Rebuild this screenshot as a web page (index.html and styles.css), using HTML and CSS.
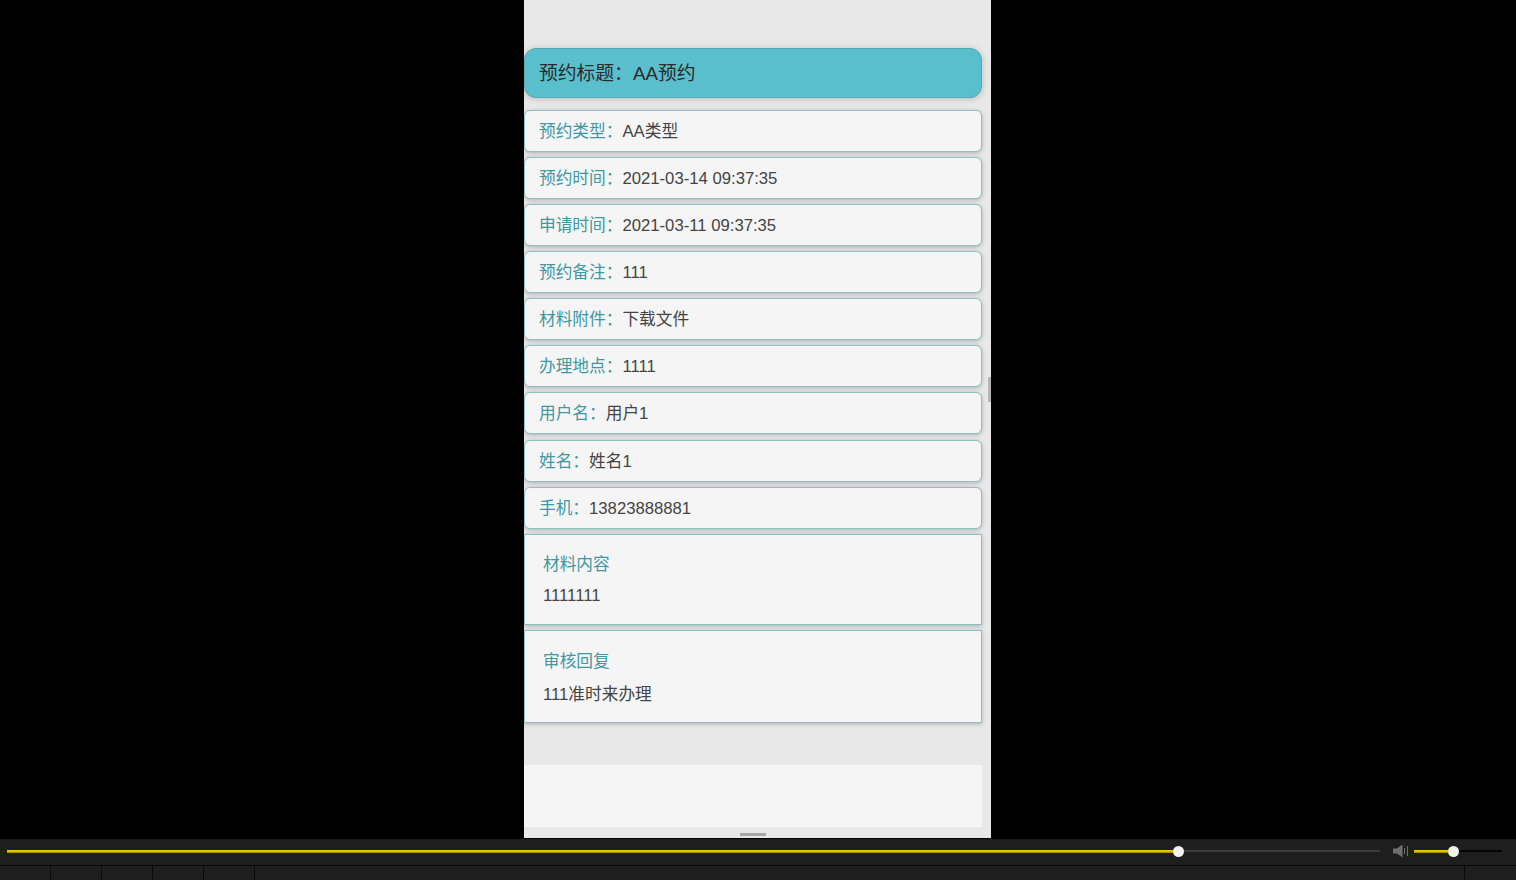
FILE: index.html
```html
<!DOCTYPE html>
<html lang="zh-CN">
<head>
<meta charset="utf-8">
<title>预约详情</title>
<link rel="stylesheet" href="styles.css">
</head>
<body>
<div class="stage">
  <main class="phone">
    <div class="content">
      <h1 class="title">预约标题：AA预约</h1>
      <ul class="rows">
        <li class="row"><span class="label">预约类型：</span>AA类型</li>
        <li class="row"><span class="label">预约时间：</span>2021-03-14 09:37:35</li>
        <li class="row"><span class="label">申请时间：</span>2021-03-11 09:37:35</li>
        <li class="row"><span class="label">预约备注：</span>111</li>
        <li class="row"><span class="label">材料附件：</span>下载文件</li>
        <li class="row"><span class="label">办理地点：</span>1111</li>
        <li class="row"><span class="label">用户名：</span>用户1</li>
        <li class="row"><span class="label">姓名：</span>姓名1</li>
        <li class="row"><span class="label">手机：</span>13823888881</li>
      </ul>
      <section class="card card-material">
        <h2 class="label card-title">材料内容</h2>
        <p class="card-body">1111111</p>
      </section>
      <section class="card card-reply">
        <h2 class="label card-title">审核回复</h2>
        <p class="card-body">111准时来办理</p>
      </section>
      <div class="footer-block"></div>
    </div>
    <div class="scroll-handle"></div>
    <div class="bottom-handle"></div>
  </main>
</div>
<footer class="player">
  <div class="seek-row">
    <div class="track seek">
      <div class="fill seek-fill"></div>
      <div class="knob"></div>
      <div class="rest"></div>
    </div>
    <svg class="speaker" viewBox="0 0 16 14" width="16" height="14" aria-hidden="true">
      <path d="M0 4.5h4L9.5 0.5v13L4 9.5H0z" fill="#6f6f6f"/>
      <path d="M11.5 4v6" stroke="#6f6f6f" stroke-width="1"/>
      <path d="M14.5 2v10" stroke="#6f6f6f" stroke-width="1"/>
    </svg>
    <div class="track volume">
      <div class="fill volume-fill"></div>
      <div class="knob"></div>
      <div class="rest rest-dark"></div>
    </div>
  </div>
  <div class="cell-row">
    <div class="cell"></div>
    <div class="cell"></div>
    <div class="cell"></div>
    <div class="cell"></div>
    <div class="cell"></div>
    <div class="cell-wide"></div>
    <div class="cell-end"></div>
  </div>
</footer>
</body>
</html>
```
FILE: styles.css
```css
* { box-sizing: border-box; }
html, body { margin: 0; padding: 0; height: 100%; overflow: hidden; background: #000; }
body {
  font-family: "Liberation Sans", "Noto Sans CJK SC", sans-serif;
  color: #444;
  display: flex;
  flex-direction: column;
  height: 880px;
}
.stage {
  height: 839px;
  display: grid;
  grid-template-columns: 524px 467px 1fr;
  grid-template-rows: 838px;
  background: #000;
}
.phone {
  grid-column: 2;
  position: relative;
  background: #e8e8e8;
  overflow: hidden;
}
.content {
  width: 458px;
  padding-top: 48px;
  display: flex;
  flex-direction: column;
}
.title {
  margin: 0;
  height: 50px;
  padding-left: 14px;
  font-size: 18.8px;
  line-height: 49px;
  font-weight: 400;
  color: #2a2a2a;
  background: #5abfcc;
  border: 1px solid #53abb8;
  border-radius: 12px;
  box-shadow: 0 1px 6px rgba(0, 0, 0, .2);
}
.rows {
  list-style: none;
  margin: 11.7px 0 0;
  padding: 0;
  display: flex;
  flex-direction: column;
  gap: 5.125px;
}
.row {
  height: 42px;
  padding-left: 14px;
  font-size: 16.7px;
  line-height: 41px;
  background: #f5f5f5;
  border: 1px solid #8fc0c6;
  border-radius: 6px;
  box-shadow: 0 1px 4px rgba(0, 0, 0, .25);
}
.label { color: #3f98a4; font-weight: 400; }
.card {
  background: #f5f5f5;
  border: 1px solid #8fc0c6;
  padding: 0 18px;
  box-shadow: 0 1px 4px rgba(0, 0, 0, .25);
}
.card-material { height: 91px; margin-top: 5.3px; padding-top: 18px; }
.card-reply { height: 93px; margin-top: 5px; padding-top: 19px; }
.card-title { margin: 0; font-size: 16.7px; line-height: 23px; }
.card-body { margin: 0; font-size: 16.7px; line-height: 23px; }
.card-material .card-body { margin-top: 8px; }
.card-reply .card-body { margin-top: 10px; }
.footer-block {
  height: 62px;
  margin-top: 42px;
  background: #f5f5f5;
  border-bottom: 1px solid #f9f9f9;
}
.scroll-handle {
  position: absolute;
  left: 464px;
  top: 377px;
  width: 3px;
  height: 25px;
  background: #b5b5b5;
}
.bottom-handle {
  position: absolute;
  left: 216px;
  top: 833px;
  width: 26px;
  height: 3px;
  background: #a8a8a8;
}
.player {
  height: 41px;
  background: #1e1e1e;
  display: flex;
  flex-direction: column;
}
.seek-row {
  height: 24px;
  border-bottom: 1px solid #0a0a0a;
  box-sizing: content-box;
  display: flex;
  align-items: center;
  padding: 0 0 2px 7px;
}
.track { display: flex; align-items: center; height: 12px; }
.seek { width: 1373px; }
.volume { width: 88px; margin-left: 5px; }
.fill { height: 3px; background: #d8b800; border-top: 1px solid #e8cc00; border-bottom: 1px solid #a89000; }
.seek-fill { width: 1166px; }
.volume-fill { width: 34px; }
.knob {
  width: 11px;
  height: 11px;
  flex: none;
  border-radius: 50%;
  background: #f2f2f2;
}
.rest { flex: 1; height: 2px; background: #3d3d3d; }
.rest-dark { background: #050505; }
.speaker { margin-left: 13px; flex: none; }
.cell-row { flex: 1; display: flex; }
.cell { width: 51px; border-right: 1px solid #0a0a0a; }
.cell-wide { width: 1210px; border-right: 1px solid #0a0a0a; }
.cell-end { flex: 1; }
```
